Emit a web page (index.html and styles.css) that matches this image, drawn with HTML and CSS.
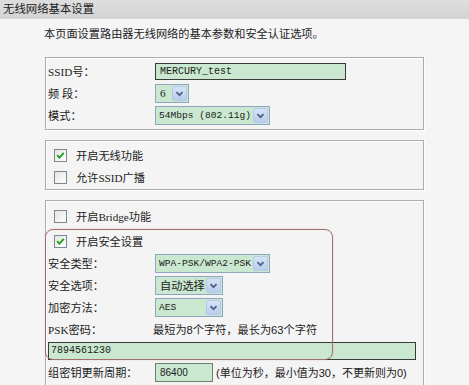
FILE: index.html
```html
<!DOCTYPE html>
<html lang="zh-CN">
<head>
    <meta charset="UTF-8">
    <title>无线网络基本设置</title>
    <link rel="stylesheet" href="styles.css">
</head>
<body>

    <!-- Title Bar -->
    <div class="title-bar">无线网络基本设置</div>

    <div class="page">

        <p class="intro">本页面设置路由器无线网络的基本参数和安全认证选项。</p>

        <!-- Basic Settings -->
        <div class="panel panel-basic">
            <div class="row">
                <span class="label">SSID号：</span>
                <span class="text-input ssid">MERCURY_test</span>
            </div>
            <div class="row">
                <span class="label">频 段：</span>
                <span class="select sel-channel"><span class="value">6</span><span class="arrow"></span></span>
            </div>
            <div class="row">
                <span class="label">模式：</span>
                <span class="select sel-wide"><span class="value mono">54Mbps (802.11g)</span><span class="arrow"></span></span>
            </div>
        </div>

        <!-- Wireless Switches -->
        <div class="panel panel-switch">
            <div class="check-row"><span class="check on"></span>开启无线功能</div>
            <div class="check-row"><span class="check"></span>允许SSID广播</div>
        </div>

        <!-- Bridge / Security -->
        <div class="panel panel-security">
            <div class="highlight"></div>

            <div class="check-row"><span class="check"></span>开启Bridge功能</div>
            <div class="check-row security-toggle"><span class="check on"></span>开启安全设置</div>

            <div class="row">
                <span class="label">安全类型：</span>
                <span class="select sel-wide"><span class="value mono">WPA-PSK/WPA2-PSK</span><span class="arrow"></span></span>
            </div>
            <div class="row">
                <span class="label">安全选项：</span>
                <span class="select sel-mid"><span class="value">自动选择</span><span class="arrow"></span></span>
            </div>
            <div class="row">
                <span class="label">加密方法：</span>
                <span class="select sel-mid"><span class="value mono">AES</span><span class="arrow"></span></span>
            </div>
            <div class="row">
                <span class="label">PSK密码：</span>
                <span class="hint">最短为8个字符，最长为63个字符</span>
            </div>
            <div class="row row-input">
                <span class="text-input psk">7894561230</span>
            </div>
            <div class="row">
                <span class="label">组密钥更新周期：</span>
                <span class="text-input period">86400</span>
                <span class="unit">(单位为秒，最小值为30，不更新则为0)</span>
            </div>
        </div>

    </div>

</body>
</html>
```

FILE: styles.css
```css
body {
    margin: 0;
    padding: 0;
    height: 385px;
    overflow: hidden;
    background-color: #f5f5f5;
    color: #1c1c1c;
    font-family: "Liberation Serif", "Noto Sans CJK SC", serif;
    font-size: 11.2px;
}

/* Title Bar */
.title-bar {
    height: 19px;
    line-height: 19px;
    padding-left: 3px;
    background: linear-gradient(#dedede, #d3d3d3);
    color: #222;
    font-size: 11.4px;
}

.page {
    padding-left: 45px;
    width: 379px;
}

.intro {
    margin: 7px 0 0 -1px;
    height: 16px;
    line-height: 16px;
}

/* Panels */
.panel {
    position: relative;
    border: 1px solid #acacac;
    box-shadow: inset 1px 1px 0 #ffffff, 1px 1px 0 #ffffff;
    background-color: #f4f4f4;
}

.panel-basic {
    margin-top: 15px;
    padding: 2px 2px 3px;
}

.panel-switch {
    margin-top: 10px;
    padding: 3px 2px 1px;
}

.panel-security {
    margin-top: 10px;
    padding: 4px 2px 0;
    height: 200px;
}

.row {
    display: flex;
    align-items: center;
    height: 22px;
    white-space: nowrap;
}

.label {
    width: 107px;
    flex-shrink: 0;
}

.check-row {
    display: flex;
    align-items: center;
    height: 22px;
    padding-left: 6px;
}

.security-toggle {
    margin-top: 3px;
}

.row-input {
    height: 21px;
}

/* Checkbox */
.check {
    width: 11px;
    height: 11px;
    margin-right: 9px;
    border: 1px solid #7d8790;
    background: linear-gradient(135deg, #e4e4e0, #ffffff);
}

.check.on {
    background-image: url("data:image/svg+xml;utf8,<svg xmlns='http://www.w3.org/2000/svg' viewBox='0 0 11 11'><path d='M2.2 5.2 L4.4 7.6 L8.8 2.8' fill='none' stroke='%2321a121' stroke-width='1.9'/></svg>"), linear-gradient(135deg, #e4e4e0, #ffffff);
}

/* Inputs */
.text-input {
    display: flex;
    align-items: center;
    flex-shrink: 0;
    box-sizing: border-box;
    padding-left: 4px;
    border: 1px solid #3a3a3a;
    background-color: #c9e8cf;
    font-family: "Liberation Mono", "Noto Sans CJK SC", monospace;
    font-size: 10px;
}

.ssid {
    width: 191px;
    height: 17px;
}

.psk {
    width: 368px;
    height: 18px;
    padding-left: 2px;
}

.period {
    width: 58px;
    height: 19px;
    font-family: "Liberation Sans", sans-serif;
    border-color: #6e7e6e;
}

.unit {
    margin-left: 3px;
    font-family: "Liberation Sans", "Noto Sans CJK SC", sans-serif;
    font-size: 11px;
}

.hint {
    margin-left: -2px;
    font-family: "Liberation Sans", "Noto Sans CJK SC", sans-serif;
}

/* Selects */
.select {
    display: flex;
    align-items: center;
    flex-shrink: 0;
    box-sizing: border-box;
    height: 19px;
    padding: 1px;
    border: 1px solid #8fa6c0;
    background-color: #c9e8cf;
    white-space: nowrap;
}

.select .value {
    flex: 1;
    overflow: hidden;
    padding-left: 3px;
}

.select .mono {
    padding-left: 2px;
    font-family: "Liberation Mono", monospace;
    font-size: 9.6px;
}

.select .arrow {
    width: 15px;
    height: 15px;
    flex-shrink: 0;
    box-sizing: border-box;
    border: 1px solid #b5c8e6;
    border-radius: 2px;
    background: url("data:image/svg+xml;utf8,<svg xmlns='http://www.w3.org/2000/svg' viewBox='0 0 15 15'><path d='M4 6 L7.5 9.5 L11 6' fill='none' stroke='%234d6185' stroke-width='2'/></svg>") center no-repeat, linear-gradient(#d6e3f7, #b9cdee);
}

.sel-channel {
    width: 34px;
}

.sel-wide {
    width: 115px;
}

.sel-mid {
    width: 68px;
}

/* Red annotation frame */
.highlight {
    position: absolute;
    left: -1px;
    top: 28px;
    width: 286px;
    height: 129px;
    border: 1.5px solid #a46e6b;
    border-radius: 8px;
    box-shadow: 0 0 2px rgba(200, 120, 120, 0.3);
    pointer-events: none;
}
```
